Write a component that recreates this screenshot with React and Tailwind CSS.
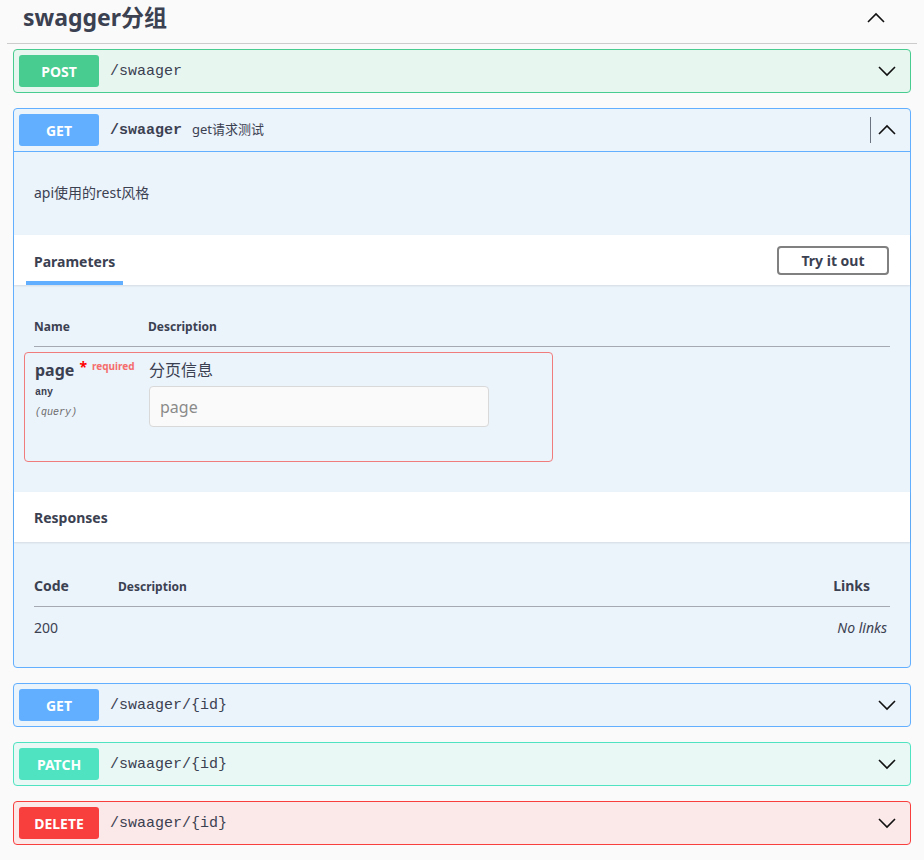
import React from 'react';

const sans = { fontFamily: '"Noto Sans", "Noto Sans CJK SC", sans-serif' };

function Chevron({ up, className = '' }) {
  return (
    <svg width="20" height="20" viewBox="0 0 20 20" className={className}>
      {up ? (
        <path d="M2 14 L10 6 L18 14" fill="none" stroke="#111" strokeWidth="1.6" />
      ) : (
        <path d="M2 6 L10 14 L18 6" fill="none" stroke="#111" strokeWidth="1.6" />
      )}
    </svg>
  );
}

const styles = {
  post: { box: 'border-[#49cc90] bg-[#e8f6f0]', badge: 'bg-[#49cc90]' },
  get: { box: 'border-[#61affe] bg-[#ebf3fb]', badge: 'bg-[#61affe]' },
  patch: { box: 'border-[#50e3c2] bg-[#e9f8f5]', badge: 'bg-[#50e3c2]' },
  delete: { box: 'border-[#f93e3e] bg-[#fbe8e8]', badge: 'bg-[#f93e3e]' },
};

function OpRow({ method, path }) {
  const s = styles[method];
  return (
    <div className={`mb-[15px] rounded border ${s.box}`}>
      <div className="flex h-[42px] items-center px-[5px]">
        <span
          className={`flex h-[32px] w-[80px] items-center justify-center rounded-[3px] text-[14px] font-bold text-white ${s.badge}`}
        >
          {method.toUpperCase()}
        </span>
        <span className="ml-[11px] pt-[2px] font-['Liberation_Mono',monospace] text-[15px] text-[#3b4151]">
          {path}
        </span>
        <Chevron className="ml-auto mr-[8px]" />
      </div>
    </div>
  );
}

export default function App() {
  return (
    <div className="min-h-[860px] bg-[#fafafa] px-[13px] text-[#3b4151]" style={sans}>
      {/* group header */}
      <div className="-mx-[6px] flex h-[44px] items-center border-b border-[#cccccc] pl-[16px] pr-[31px]">
        <h2 className="-mt-[8px] text-[23px] font-bold text-[#3b4151]">swagger分组</h2>
        <Chevron up className="-mt-[8px] ml-auto" />
      </div>
      <div className="h-[5px]" />

      <OpRow method="post" path="/swaager" />

      {/* expanded GET */}
      <div className="mb-[15px] rounded border border-[#61affe] bg-[#ebf3fb]">
        <div className="flex h-[43px] items-center border-b border-[#61affe] px-[5px]">
          <span className="flex h-[32px] w-[80px] items-center justify-center rounded-[3px] bg-[#61affe] text-[14px] font-bold text-white">
            GET
          </span>
          <span className="ml-[11px] pt-[2px] font-['Liberation_Mono',monospace] text-[15px] font-bold text-[#3b4151]">
            /swaager
          </span>
          <span className="ml-[10px] text-[13px] text-[#3b4151]">get请求测试</span>
          <div className="ml-auto flex items-center">
            <span className="h-[26px] w-px bg-[#6b7280]" />
            <Chevron up className="ml-[6px] mr-[8px]" />
          </div>
        </div>

        <div className="px-[20px] pb-[32px] pt-[30px] text-[14px]">api使用的rest风格</div>

        <div className="flex h-[50px] items-end justify-between bg-white pl-[12px] pr-[21px] shadow-[0_1px_2px_rgba(0,0,0,0.1)]">
          <div className="border-b-4 border-[#61affe] px-[8px] pb-[9px] text-[14px] font-bold">
            Parameters
          </div>
          <button className="mb-[10px] h-[29px] w-[112px] rounded border-2 border-[#808080] text-[14px] font-bold text-[#3b4151]">
            Try it out
          </button>
        </div>

        <div className="px-[20px] pb-[30px] pt-[33px]">
          <div className="flex border-b border-[#a5a9b2] pb-[10px] text-[12px] font-bold">
            <span className="w-[114px]">Name</span>
            <span>Description</span>
          </div>
          <div className="-mx-[10px] mt-[5px] flex h-[110px] w-[529px] rounded border border-[#f07c7c] px-[10px] pt-[5px]">
            <div className="w-[114px]">
              <div className="flex items-start">
                <span className="text-[16px] font-bold leading-[24px]">page</span>
                <span className="ml-[5px] mt-[2px] text-[14px] font-bold leading-[14px] text-[#ff0000]">*</span>
                <span className="ml-[5px] mt-[1px] text-[10px] font-bold leading-[14px] text-[#f56d6d]">required</span>
              </div>
              <div className="mt-[3px] font-['Liberation_Mono',monospace] text-[10px] font-bold">any</div>
              <div className="mt-[5px] font-['Liberation_Mono',monospace] text-[10px] italic text-[#6b6b6b]">
                (query)
              </div>
            </div>
            <div>
              <div className="text-[16px] leading-[24px]">分页信息</div>
              <input
                placeholder="page"
                className="mt-[4px] h-[41px] w-[340px] rounded border border-[#d9d9d9] bg-[#fafafa] px-[10px] text-[16px] placeholder:text-[#8a8a8a]"
                readOnly
              />
            </div>
          </div>
        </div>

        <div className="flex h-[50px] items-center bg-white px-[20px] shadow-[0_1px_2px_rgba(0,0,0,0.1)]">
          <span className="text-[14px] font-bold">Responses</span>
        </div>

        <div className="px-[20px] pb-[29px] pt-[33px]">
          <div className="flex items-end border-b border-[#a5a9b2] pb-[10px]">
            <span className="w-[84px] text-[14px] font-bold">Code</span>
            <span className="text-[12px] font-bold">Description</span>
            <span className="ml-auto mr-[20px] text-[14px] font-bold">Links</span>
          </div>
          <div className="flex pt-[10px] text-[14px]">
            <span>200</span>
            <span className="ml-auto mr-[3px] italic">No links</span>
          </div>
        </div>
      </div>

      <OpRow method="get" path="/swaager/{id}" />
      <OpRow method="patch" path="/swaager/{id}" />
      <OpRow method="delete" path="/swaager/{id}" />
    </div>
  );
}
